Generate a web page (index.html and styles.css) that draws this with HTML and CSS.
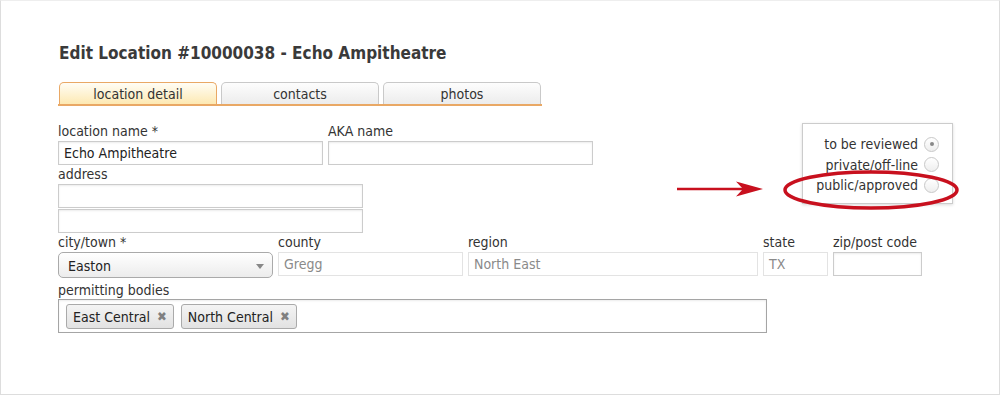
FILE: index.html
```html
<!DOCTYPE html>
<html lang="en">
<head>
    <meta charset="UTF-8">
    <meta name="viewport" content="width=device-width, initial-scale=1">
    <title>Edit Location</title>
    <link rel="stylesheet" href="styles.css">
</head>
<body>
    <div class="frame">
        <div class="page">
            <h1>Edit Location #10000038 - Echo Ampitheatre</h1>

            <div class="tabs">
                <div class="tab active">location detail</div>
                <div class="tab">contacts</div>
                <div class="tab">photos</div>
            </div>

            <div class="top">
                <div class="top-fields">
                    <div class="row">
                        <div class="field w-name">
                            <label>location name *</label>
                            <div class="input">Echo Ampitheatre</div>
                        </div>
                        <div class="field w-name">
                            <label>AKA name</label>
                            <div class="input"></div>
                        </div>
                    </div>
                    <div class="field w-address">
                        <label>address</label>
                        <div class="input"></div>
                        <div class="input"></div>
                    </div>
                </div>

                <div class="status">
                    <div class="status-row">to be reviewed <span class="radio checked"></span></div>
                    <div class="status-row">private/off-line <span class="radio"></span></div>
                    <div class="status-row">public/approved <span class="radio"></span></div>
                </div>
            </div>

            <div class="row city-row">
                <div class="field w-city">
                    <label>city/town *</label>
                    <div class="select">Easton <span class="caret"></span></div>
                </div>
                <div class="field w-county">
                    <label>county</label>
                    <div class="input readonly">Gregg</div>
                </div>
                <div class="field w-region">
                    <label>region</label>
                    <div class="input readonly">North East</div>
                </div>
                <div class="field w-state">
                    <label>state</label>
                    <div class="input readonly">TX</div>
                </div>
                <div class="field w-zip">
                    <label>zip/post code</label>
                    <div class="input"></div>
                </div>
            </div>

            <div class="field w-bodies">
                <label>permitting bodies</label>
                <div class="tag-box">
                    <span class="tag">East Central <span class="tag-x">&#x2716;</span></span>
                    <span class="tag">North Central <span class="tag-x">&#x2716;</span></span>
                </div>
            </div>
        </div>

        <svg class="callout" width="300" height="50" viewBox="0 0 300 50">
            <line x1="3" y1="24" x2="72" y2="24" stroke="#c8101e" stroke-width="2.5"/>
            <path d="M62 16.5 L89 24 L62 31.5 L69 24 Z" fill="#c8101e"/>
            <ellipse cx="197" cy="25" rx="86" ry="18" fill="none" stroke="#c8101e" stroke-width="3.5"/>
        </svg>
    </div>
</body>
</html>
```

FILE: styles.css
```css
body {
    margin: 0;
    font-family: "DejaVu Sans Condensed", "DejaVu Sans", sans-serif;
    color: #333;
    background-color: #fff;
}

.frame {
    position: relative;
    height: 395px;
    box-sizing: border-box;
    border: 1px solid #ddd;
    border-top-color: #eee;
}

.page {
    padding: 42px 0 0 57px;
}

h1 {
    margin: 0 0 19px 1px;
    font-size: 17px;
    line-height: 20px;
    font-weight: bold;
    color: #3a3a3a;
}

/* tabs */
.tabs {
    display: flex;
    gap: 4px;
    width: 483px;
    padding-left: 1px;
    border-bottom: 2px solid #e9a865;
}

.tab {
    width: 156px;
    height: 21px;
    line-height: 22px;
    text-align: center;
    font-size: 14px;
    color: #333;
    border: 1px solid #c9c9c9;
    border-bottom: none;
    border-radius: 5px 5px 0 0;
    background: linear-gradient(#fdfdfd, #ececec);
}

.tab.active {
    border-color: #e9a865;
    background: linear-gradient(#fffdf5, #fde9b3);
}

/* fields */
.top {
    display: flex;
    justify-content: space-between;
    width: 895px;
    margin-top: 17px;
}

.row {
    display: flex;
    gap: 5px;
}

.field label {
    display: block;
    height: 17px;
    line-height: 17px;
    font-size: 14px;
    color: #333;
}

.input {
    height: 22px;
    line-height: 22px;
    margin-top: 1px;
    padding: 0 5px;
    font-size: 14px;
    color: #222;
    border: 1px solid #ccc;
    box-shadow: inset 0 1px 2px rgba(0, 0, 0, 0.08);
}

.input.readonly {
    color: #8a8a8a;
    border-color: #e3e3e3;
    box-shadow: none;
}

.w-name { width: 265px; }
.w-address { width: 305px; margin-top: 1px; }
.w-city { width: 215px; }
.w-county { width: 185px; }
.w-region { width: 290px; }
.w-state { width: 65px; }
.w-zip { width: 89px; }
.w-bodies { width: 709px; margin-top: 4px; }

.field .input {
    box-sizing: border-box;
    height: 24px;
}

.w-address .input + .input {
    margin-top: 1px;
}

.city-row {
    margin-top: 1px;
}

.select {
    position: relative;
    height: 26px;
    line-height: 26px;
    margin-top: 1px;
    box-sizing: border-box;
    padding: 0 9px;
    font-size: 14px;
    color: #222;
    border: 1px solid #aaa;
    border-radius: 5px;
    background: linear-gradient(#fff, #ececec);
}

.caret {
    position: absolute;
    right: 8px;
    top: 11px;
    border-left: 4px solid transparent;
    border-right: 4px solid transparent;
    border-top: 5px solid #888;
}

.tag-box {
    display: flex;
    gap: 7px;
    height: 34px;
    box-sizing: border-box;
    padding: 4px 7px;
    border: 1px solid #a5a5a5;
    box-shadow: inset 0 1px 2px rgba(0, 0, 0, 0.08);
}

.tag {
    display: flex;
    align-items: center;
    gap: 7px;
    height: 23px;
    padding: 0 6px;
    font-size: 14px;
    color: #222;
    border: 1px solid #aaa;
    border-radius: 3px;
    background: linear-gradient(#f4f4f4, #e2e2e2);
}

.tag-x {
    font-size: 13px;
    color: #808080;
}

/* status box */
.status {
    width: 151px;
    height: 81px;
    margin-top: 0;
    box-sizing: border-box;
    padding: 10px 13px 0 0;
    border: 1px solid #ccc;
    box-shadow: 0 1px 3px rgba(0, 0, 0, 0.15);
}

.status-row {
    display: flex;
    justify-content: flex-end;
    align-items: center;
    gap: 6px;
    height: 20.5px;
    font-size: 14px;
    color: #333;
}

.radio {
    width: 13px;
    height: 13px;
    border: 1px solid #c8c8c8;
    border-radius: 50%;
    background: linear-gradient(#fff, #eee);
    position: relative;
}

.radio.checked::after {
    content: "";
    position: absolute;
    left: 4.5px;
    top: 4.5px;
    width: 4px;
    height: 4px;
    border-radius: 50%;
    background-color: #888;
}

/* annotation */
.callout {
    position: absolute;
    left: 673px;
    top: 164px;
}
```
